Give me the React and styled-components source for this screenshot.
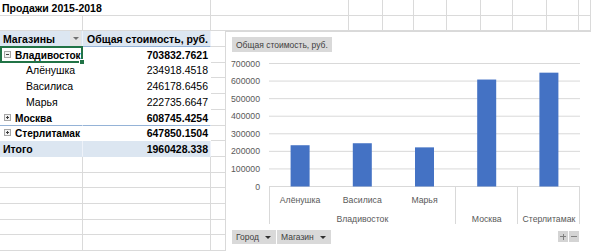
import React from 'react';
import styled, { createGlobalStyle, css } from 'styled-components';

const GlobalStyle = createGlobalStyle`
  html, body { margin: 0; padding: 0; background: #fff; }
  body { font-family: "Liberation Sans", Arial, sans-serif; overflow: hidden; }
`;

const COLS = [83, 128, 138, 34, 31, 33, 34, 32, 34, 32, 12];
const ROW_H = 15.7;
const GRID = '#dadada';
const PIVOT_BLUE = '#dce6f1';
const PIVOT_LINE = '#95b3d7';

const Page = styled.div`
  position: relative;
  width: 591px;
  height: 251px;
  overflow: hidden;
  background: #fff;
`;

const Sheet = styled.div`
  display: grid;
  grid-template-columns: ${COLS.map((c) => `${c}px`).join(' ')};
  grid-auto-rows: ${ROW_H}px;
  font-size: 10.5px;
  color: #000;
`;

const Cell = styled.div`
  position: relative;
  box-sizing: border-box;
  border-right: 1px solid ${GRID};
  border-bottom: 1px solid ${GRID};
  display: flex;
  align-items: flex-end;
  padding: 0 2px 1px 2px;
  white-space: nowrap;
  min-width: 0;
  ${(p) => p.$span && css`grid-column: span ${p.$span};`}
  ${(p) => p.$right && css`justify-content: flex-end;`}
  ${(p) => p.$bold && css`font-weight: 700;`}
  ${(p) => p.$indent && css`padding-left: ${p.$indent}px;`}
  ${(p) =>
    p.$kind === 'header' &&
    css`
      background: ${PIVOT_BLUE};
      border-bottom-color: ${PIVOT_LINE};
      border-right-color: #eef2f9;
    `}
  ${(p) =>
    p.$kind === 'body' &&
    css`
      border-bottom-color: #fff;
      border-right-color: #fff;
    `}
  ${(p) =>
    p.$kind === 'groupEnd' &&
    css`
      border-bottom-color: ${PIVOT_LINE};
      border-right-color: #fff;
    `}
  ${(p) =>
    p.$kind === 'total' &&
    css`
      background: ${PIVOT_BLUE};
      border-bottom-color: ${PIVOT_BLUE};
      border-right-color: #eef2f9;
    `}
  ${(p) =>
    p.$selected &&
    css`
      &::after {
        content: '';
        position: absolute;
        left: 0;
        top: -1px;
        right: -1px;
        bottom: -1px;
        border: 2px solid #217346;
        pointer-events: none;
      }
      &::before {
        content: '';
        position: absolute;
        right: -3px;
        bottom: -3px;
        width: 4px;
        height: 4px;
        background: #217346;
        border: 1px solid #fff;
        z-index: 1;
      }
    `}
`;

const HeaderLabel = styled.span`
  flex: 1;
`;

const DropButton = styled.span`
  align-self: stretch;
  width: 11px;
  margin: 0 -1px -1px 0;
  background: #e4e4e4;
  display: flex;
  align-items: center;
  justify-content: center;
  &::after {
    content: '';
    border-left: 3px solid transparent;
    border-right: 3px solid transparent;
    border-top: 3px solid #707070;
  }
`;

const ToggleBox = styled.span`
  position: relative;
  box-sizing: border-box;
  align-self: center;
  flex: none;
  width: 7px;
  height: 7px;
  margin: 1px 4px 0 1px;
  border: 1px solid #a6a6a6;
  background: #f2f2f2;
  &::before {
    content: '';
    position: absolute;
    left: 1px;
    top: 2px;
    width: 3px;
    height: 1px;
    background: #404040;
  }
  ${(p) =>
    p.$plus &&
    css`
      &::after {
        content: '';
        position: absolute;
        left: 2px;
        top: 1px;
        width: 1px;
        height: 3px;
        background: #404040;
      }
    `}
`;

const RowLabel = styled.span`
  ${(p) => p.$bold && css`font-size: 10.1px;`}
`;

/* ---------- Chart ---------- */

const Chart = styled.div`
  position: absolute;
  left: 225px;
  top: 31px;
  width: 366px;
  height: 220px;
  box-sizing: border-box;
  background: #fff;
  border-left: 1px solid #d9d9d9;
  border-top: 1px solid #d9d9d9;
  display: flex;
  flex-direction: column;
  font-family: "Liberation Sans", Arial, sans-serif;
`;

const FieldButton = styled.div`
  align-self: flex-start;
  height: 15px;
  margin: 5px 0 0 6px;
  padding: 0 4px;
  background: #d9d9d9;
  color: #404040;
  font-size: 8.5px;
  display: flex;
  align-items: center;
  white-space: nowrap;
`;

const Plot = styled.svg`
  display: block;
  margin-top: 1px;
  flex: none;
  text {
    font-family: "Liberation Sans", Arial, sans-serif;
    font-size: 8.7px;
    fill: #595959;
  }
`;

const BottomBar = styled.div`
  height: 14px;
  margin-top: 2px;
  padding: 0 12px 0 6px;
  display: flex;
  align-items: center;
`;

const Filters = styled.div`
  display: flex;
  gap: 1px;
  flex: 1;
`;

const FilterButton = styled.div`
  height: 14px;
  padding: 0 5px 0 4px;
  background: #d9d9d9;
  color: #404040;
  font-size: 8.5px;
  display: flex;
  align-items: center;
  gap: 6px;
  white-space: nowrap;
  &::after {
    content: '';
    border-left: 3px solid transparent;
    border-right: 3px solid transparent;
    border-top: 3px solid #303030;
  }
`;

const ZoomGroup = styled.div`
  display: flex;
  gap: 1px;
  align-self: flex-start;
  margin-top: 1px;
`;

const ZoomButton = styled.div`
  position: relative;
  width: 10px;
  height: 11px;
  background: #d4d4d4;
  &::before {
    content: '';
    position: absolute;
    left: 2px;
    top: 5px;
    width: 6px;
    height: 1px;
    background: #808080;
  }
  ${(p) =>
    p.$plus &&
    css`
      &::after {
        content: '';
        position: absolute;
        left: 4.5px;
        top: 2.5px;
        width: 1px;
        height: 6px;
        background: #808080;
      }
    `}
`;

const values = [234918.4518, 246178.6456, 222735.6647, 608745.4254, 647850.1504];
const Y0 = 186.5;
const STEP = 17.571;
const PX0 = 269;
const PX1 = 580;
const CW = (PX1 - PX0) / 5;
const BAR_W = 19;

function ColumnChart() {
  const gridVals = [0, 1, 2, 3, 4, 5, 6, 7];
  const cx = (i) => PX0 + CW * (i + 0.5);
  return (
    <Plot width="365" height="175" viewBox="0 0 365 175">
      <g transform="translate(-226,-53)">
        {gridVals.map((k) => {
          const y = Y0 - k * STEP;
          return (
            <g key={k}>
              <line x1={PX0} x2={PX1} y1={y} y2={y} stroke="#d9d9d9" strokeWidth="1" />
              <text x="260" y={y + 3} textAnchor="end">
                {k * 100000}
              </text>
            </g>
          );
        })}
        {values.map((v, i) => {
          const h = (v / 100000) * STEP;
          return (
            <rect
              key={i}
              x={cx(i) - BAR_W / 2}
              y={Y0 - h}
              width={BAR_W}
              height={h}
              fill="#4472c4"
            />
          );
        })}
        {[269.5, 455.5, 517.5, 579.5].map((x) => (
          <line key={x} x1={x} x2={x} y1={Y0} y2={224} stroke="#d9d9d9" strokeWidth="1" />
        ))}
        <text x={cx(0)} y="202.5" textAnchor="middle">Алёнушка</text>
        <text x={cx(1)} y="202.5" textAnchor="middle">Василиса</text>
        <text x={cx(2)} y="202.5" textAnchor="middle">Марья</text>
        <text x={cx(1)} y="221.5" textAnchor="middle">Владивосток</text>
        <text x={cx(3)} y="221.5" textAnchor="middle">Москва</text>
        <text x={cx(4)} y="221.5" textAnchor="middle">Стерлитамак</text>
      </g>
    </Plot>
  );
}

const emptyRest = (n, prefix) =>
  Array.from({ length: n }, (_, i) => <Cell key={`${prefix}-${i}`} />);

const pivotRows = [
  { label: 'Владивосток', value: '703832.7621', bold: true, toggle: 'minus', selected: true },
  { label: 'Алёнушка', value: '234918.4518', indent: 26 },
  { label: 'Василиса', value: '246178.6456', indent: 26 },
  { label: 'Марья', value: '222735.6647', indent: 26 },
  { label: 'Москва', value: '608745.4254', bold: true, toggle: 'plus', end: true },
  { label: 'Стерлитамак', value: '647850.1504', bold: true, toggle: 'plus' },
];

export default function App() {
  const restCols = COLS.length - 2;
  return (
    <Page>
      <GlobalStyle />
      <Sheet>
        <Cell $span={2} $bold>Продажи 2015-2018</Cell>
        {emptyRest(restCols, 'r1')}
        {emptyRest(COLS.length, 'r2')}
        <Cell $kind="header" $bold $indent={3}>
          <HeaderLabel>Магазины</HeaderLabel>
          <DropButton />
        </Cell>
        <Cell $kind="header" $bold $right>Общая стоимость, руб.</Cell>
        {emptyRest(restCols, 'r3')}
        {pivotRows.map((r, idx) => (
          <React.Fragment key={r.label}>
            <Cell
              $kind={r.end ? 'groupEnd' : 'body'}
              $bold={r.bold}
              $indent={r.indent || 3}
              $selected={r.selected}
            >
              {r.toggle && <ToggleBox $plus={r.toggle === 'plus'} />}
              <RowLabel $bold={r.bold}>{r.label}</RowLabel>
            </Cell>
            <Cell $kind={r.end ? 'groupEnd' : 'body'} $bold={r.bold} $right>
              {r.value}
            </Cell>
            {emptyRest(restCols, `p${idx}`)}
          </React.Fragment>
        ))}
        <Cell $kind="total" $bold $indent={3}>Итого</Cell>
        <Cell $kind="total" $bold $right>1960428.338</Cell>
        {emptyRest(restCols, 'tot')}
        {Array.from({ length: 6 }, (_, r) => emptyRest(COLS.length, `e${r}`))}
      </Sheet>

      <Chart>
        <FieldButton>Общая стоимость, руб.</FieldButton>
        <ColumnChart />
        <BottomBar>
          <Filters>
            <FilterButton>Город</FilterButton>
            <FilterButton>Магазин</FilterButton>
          </Filters>
          <ZoomGroup>
            <ZoomButton $plus />
            <ZoomButton />
          </ZoomGroup>
        </BottomBar>
      </Chart>
    </Page>
  );
}
